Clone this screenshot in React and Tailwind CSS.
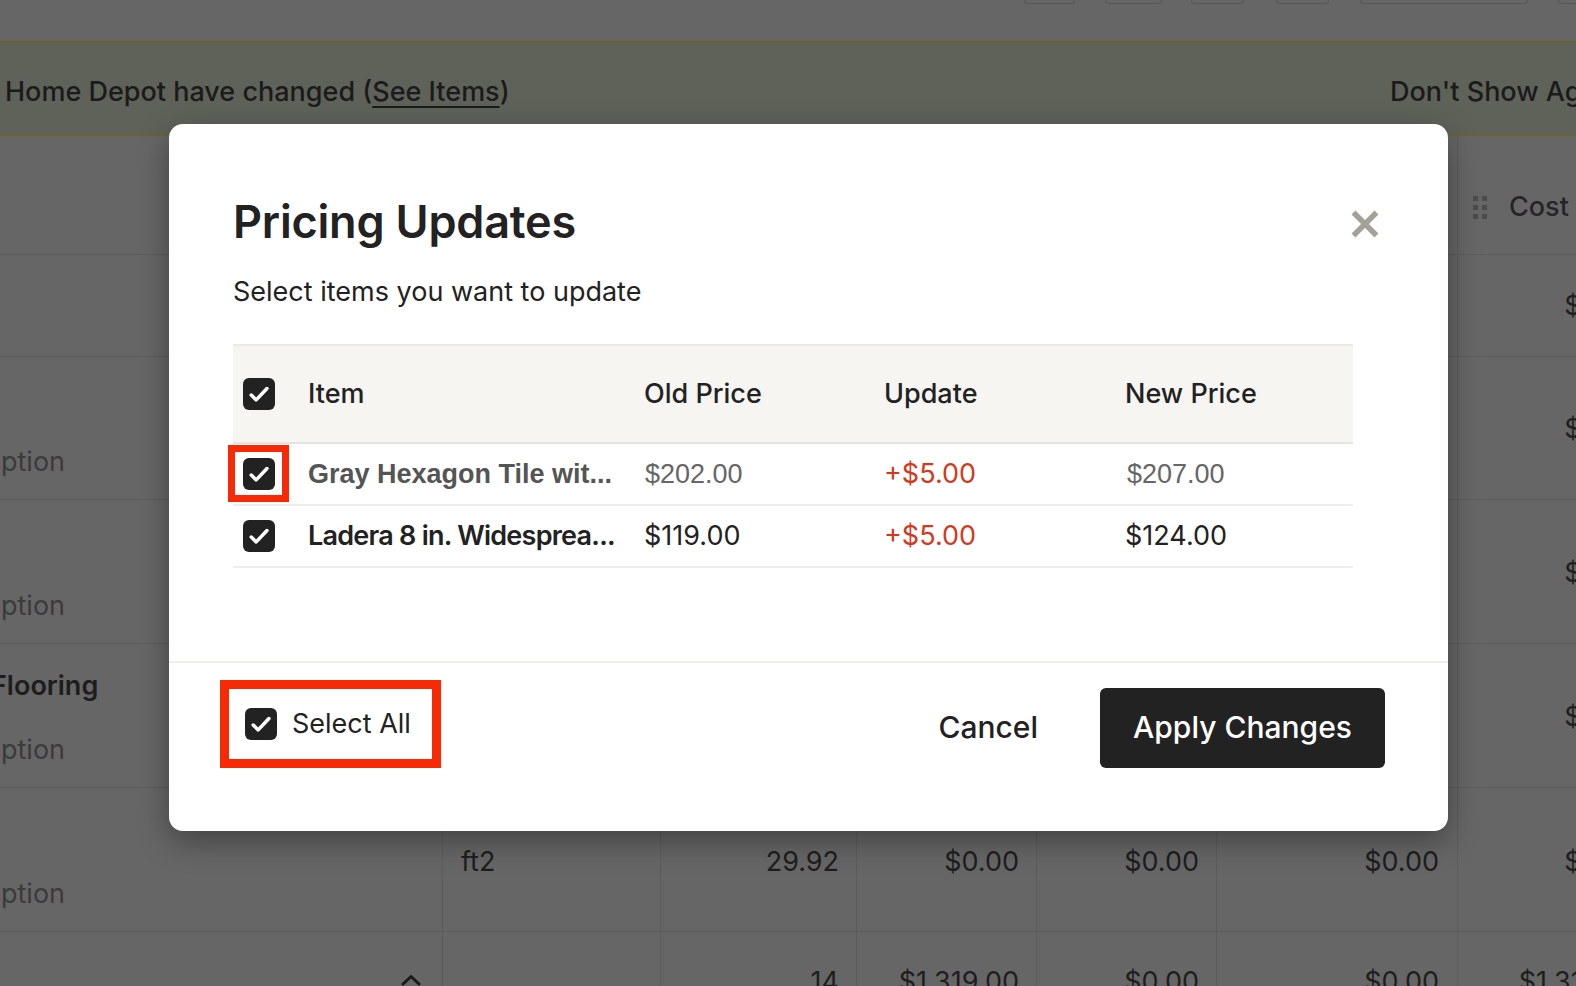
import React from "react";

const CheckBox = ({ className }) => (
  <span className={"flex shrink-0 items-center justify-center rounded-[6px] bg-[#222222] " + className}>
    <svg viewBox="0 0 31 31" className="h-full w-full" fill="none" stroke="white" strokeWidth="3.4" strokeLinecap="round" strokeLinejoin="round">
      <path d="M8 16.5 L12.8 21.2 L23.2 10.2" />
    </svg>
  </span>
);

const BgVal = ({ children, className = "" }) => (
  <div className={"flex justify-end border-l border-[#5c5c5c] text-[27px] text-[#1e1e1e] " + className}>
    {children}
  </div>
);

export default function App() {
  return (
    <div className="relative h-[986px] w-[1576px] overflow-hidden bg-[#666666] font-['Inter',sans-serif]">
      {/* top toolbar (buttons cut off at top) */}
      <div className="flex h-[41px] items-start pl-[1024px]">
        <div className="h-[4px] w-[51px] shrink-0 rounded-b-[6px] border-x border-b border-[#575757]" />
        <div className="ml-[30px] h-[4px] w-[57px] shrink-0 rounded-b-[6px] border-x border-b border-[#575757]" />
        <div className="ml-[29px] h-[4px] w-[53px] shrink-0 rounded-b-[6px] border-x border-b border-[#575757]" />
        <div className="ml-[32px] h-[4px] w-[53px] shrink-0 rounded-b-[6px] border-x border-b border-[#575757]" />
        <div className="ml-[31px] h-[4px] w-[168px] shrink-0 rounded-b-[6px] border-x border-b border-[#575757]" />
        <div className="ml-[30px] h-[4px] w-[60px] shrink-0 rounded-b-[6px] border-x border-b border-[#575757]" />
      </div>

      {/* banner */}
      <div className="flex h-[95px] items-center whitespace-nowrap border-y-2 border-[#6d6236] bg-[#5e6259] pt-[8px] text-[27px] font-medium text-[#1b1b1b]">
        <div className="w-[1390px] shrink-0 pl-[5px]">
          Home Depot have changed (<span className="underline decoration-2 underline-offset-[5px]">See Items</span>)
        </div>
        <div className="shrink-0">Don't Show Again</div>
      </div>

      {/* background table */}
      <div className="grid w-[1657px] grid-cols-[442px_218px_196px_180px_180px_241px_200px]">
        {/* header */}
        <div className="h-[119px] border-b border-[#5c5c5c]" />
        <div className="border-b border-l border-[#5c5c5c]" />
        <div className="border-b border-l border-[#5c5c5c]" />
        <div className="border-b border-l border-[#5c5c5c]" />
        <div className="border-b border-l border-[#5c5c5c]" />
        <div className="border-b border-l border-[#5c5c5c]" />
        <div className="flex items-center gap-[22px] border-b border-l border-[#5c5c5c] pl-[15px] pt-[24px]">
          <div className="grid grid-cols-2 gap-[4px]">
            <span className="h-[5px] w-[5px] bg-[#4c4c4c]" />
            <span className="h-[5px] w-[5px] bg-[#4c4c4c]" />
            <span className="h-[5px] w-[5px] bg-[#4c4c4c]" />
            <span className="h-[5px] w-[5px] bg-[#4c4c4c]" />
            <span className="h-[5px] w-[5px] bg-[#4c4c4c]" />
            <span className="h-[5px] w-[5px] bg-[#4c4c4c]" />
          </div>
          <span className="text-[27px] font-medium text-[#262626]">Cost</span>
        </div>

        {/* row 1 */}
        <div className="h-[102px] border-b border-[#5c5c5c]" />
        <BgVal className="border-b" />
        <BgVal className="border-b" />
        <BgVal className="border-b" />
        <BgVal className="border-b" />
        <BgVal className="border-b" />
        <BgVal className="items-center border-b pr-[18px] pt-[2px]">$0.00</BgVal>

        {/* row 2 */}
        <div className="flex h-[143px] flex-col justify-end border-b border-[#5c5c5c] pb-[21px] text-[27px] leading-[32px] text-[#3b3b3b]">
          <span className="pl-[1px]">ption</span>
        </div>
        <BgVal className="border-b" />
        <BgVal className="border-b" />
        <BgVal className="border-b" />
        <BgVal className="border-b" />
        <BgVal className="border-b" />
        <BgVal className="items-center border-b pr-[18px] pt-[2px]">$0.00</BgVal>

        {/* row 3 */}
        <div className="flex h-[144px] flex-col justify-end border-b border-[#5c5c5c] pb-[21px] text-[27px] leading-[32px] text-[#3b3b3b]">
          <span className="pl-[1px]">ption</span>
        </div>
        <BgVal className="border-b" />
        <BgVal className="border-b" />
        <BgVal className="border-b" />
        <BgVal className="border-b" />
        <BgVal className="border-b" />
        <BgVal className="items-center border-b pr-[18px] pt-[4px]">$0.00</BgVal>

        {/* row 4 */}
        <div className="flex h-[144px] flex-col justify-between overflow-hidden border-b border-[#5c5c5c] pb-[21px] pt-[26px] text-[27px] leading-[32px]">
          <span className="-ml-[9px] font-semibold text-[#1d1d1d]">Flooring</span>
          <span className="pl-[1px] text-[#3b3b3b]">ption</span>
        </div>
        <BgVal className="border-b" />
        <BgVal className="border-b" />
        <BgVal className="border-b" />
        <BgVal className="border-b" />
        <BgVal className="border-b" />
        <BgVal className="items-center border-b pr-[18px] pt-[4px]">$0.00</BgVal>

        {/* row 5 */}
        <div className="flex h-[144px] flex-col justify-end border-b border-[#5c5c5c] pb-[21px] text-[27px] leading-[32px] text-[#3b3b3b]">
          <span className="pl-[1px]">ption</span>
        </div>
        <div className="flex items-center border-b border-l border-[#5c5c5c] pl-[18px] pt-[5px] text-[27px] text-[#1e1e1e]">ft2</div>
        <BgVal className="items-center border-b pr-[17px] pt-[5px]">29.92</BgVal>
        <BgVal className="items-center border-b pr-[17px] pt-[5px]">$0.00</BgVal>
        <BgVal className="items-center border-b pr-[17px] pt-[5px]">$0.00</BgVal>
        <BgVal className="items-center border-b pr-[18px] pt-[5px]">$0.00</BgVal>
        <BgVal className="items-center border-b pr-[18px] pt-[5px]">$0.00</BgVal>

        {/* row 6 */}
        <div className="flex h-[144px] items-start justify-end pr-[21px] pt-[42px]">
          <svg viewBox="0 0 20 12" className="h-[12px] w-[20px]" fill="none" stroke="#1a1a1a" strokeWidth="3" strokeLinecap="round" strokeLinejoin="round">
            <path d="M2 10 L10 2.5 L18 10" />
          </svg>
        </div>
        <BgVal className="items-start" />
        <BgVal className="items-start pr-[17px] pt-[30px]">14</BgVal>
        <BgVal className="items-start pr-[17px] pt-[30px]">$1,319.00</BgVal>
        <BgVal className="items-start pr-[17px] pt-[30px]">$0.00</BgVal>
        <BgVal className="items-start pr-[18px] pt-[30px]">$0.00</BgVal>
        <BgVal className="items-start pr-[18px] pt-[30px]">$1,319.00</BgVal>
      </div>

      {/* modal */}
      <div className="absolute left-[169px] top-[124px] flex h-[707px] w-[1279px] flex-col rounded-[14px] bg-white shadow-[0_10px_30px_rgba(0,0,0,0.35)]">
        <div className="flex-1 pl-[64px] pt-[71px]">
          <div className="flex h-[54px] items-center justify-between pr-[68px]">
            <h2 className="text-[45px] font-semibold leading-[54px] tracking-[-0.2px] text-[#222222]">Pricing Updates</h2>
            <svg viewBox="0 0 30 30" className="mt-[3px] h-[30px] w-[30px]" fill="none" stroke="#a4a196" strokeWidth="5.5">
              <path d="M3.5 3.5 L26.5 26.5 M26.5 3.5 L3.5 26.5" />
            </svg>
          </div>
          <p className="mt-[26px] text-[27px] leading-[34px] text-[#222222]">Select items you want to update</p>

          {/* table */}
          <div className="mt-[35px] w-[1120px] border-t-2 border-[#ebe9e4] text-[27px]">
            <div className="grid h-[98px] grid-cols-[75px_336px_240px_241px_228px] items-center border-b-2 border-[#e6e4df] bg-[#f6f5f2] font-medium text-[#222222]">
              <div className="pl-[10px]">
                <CheckBox className="h-[32px] w-[32px]" />
              </div>
              <div>Item</div>
              <div>Old Price</div>
              <div>Update</div>
              <div>New Price</div>
            </div>
            <div className="grid h-[62px] grid-cols-[75px_336px_240px_241px_228px] items-center border-b-2 border-[#efeeea]">
              <div className="relative flex h-full items-center pl-[10px]">
                <span className="absolute -left-[5px] top-[1px] h-[57px] w-[61px] border-[7px] border-[#f82a06]" />
                <CheckBox className="relative h-[32px] w-[32px]" />
              </div>
              <div className="truncate font-['Liberation_Sans',Arial,sans-serif] font-bold text-[#555555]">Gray Hexagon Tile wit...</div>
              <div className="pl-[1px] font-['Liberation_Sans',Arial,sans-serif] text-[#666666]">$202.00</div>
              <div className="text-[#d23a1f]">+$5.00</div>
              <div className="pl-[2px] font-['Liberation_Sans',Arial,sans-serif] text-[#666666]">$207.00</div>
            </div>
            <div className="grid h-[62px] grid-cols-[75px_336px_240px_241px_228px] items-center border-b-2 border-[#efeeea] text-[#222222]">
              <div className="pl-[10px]">
                <CheckBox className="h-[32px] w-[32px]" />
              </div>
              <div className="truncate font-semibold tracking-[-0.75px]">Ladera 8 in. Widesprea...</div>
              <div>$119.00</div>
              <div className="text-[#d23a1f]">+$5.00</div>
              <div>$124.00</div>
            </div>
          </div>
        </div>

        {/* footer */}
        <div className="flex items-center justify-between border-t-2 border-[#f0eee9] pb-[63px] pl-[51px] pr-[63px] pt-[17px]">
          <div className="flex h-[88px] w-[221px] items-center gap-[15px] border-[9px] border-[#f82a06] pl-[16px]">
            <CheckBox className="h-[32px] w-[32px]" />
            <span className="text-[27px] text-[#222222]">Select All</span>
          </div>
          <div className="mt-[7px] flex items-center gap-[62px]">
            <span className="text-[30px] font-medium text-[#222222]">Cancel</span>
            <button className="flex h-[80px] w-[285px] items-center justify-center rounded-[6px] bg-[#222222] text-[30px] font-medium text-white">
              Apply Changes
            </button>
          </div>
        </div>
      </div>
    </div>
  );
}
